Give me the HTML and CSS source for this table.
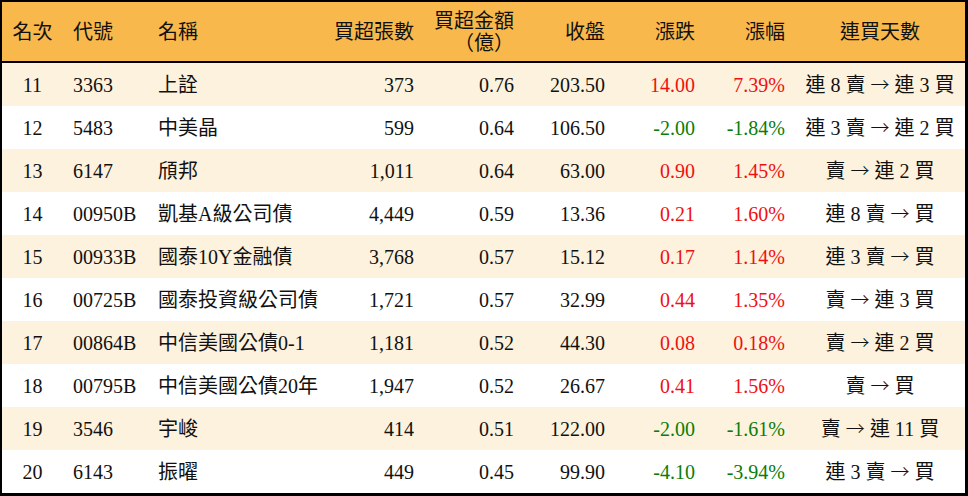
FILE: index.html
```html
<!DOCTYPE html>
<html lang="zh-Hant">
<head>
<meta charset="utf-8">
<title>買超排行</title>
<link rel="stylesheet" href="styles.css">
</head>
<body>
<table class="rank">
  <colgroup>
    <col class="c-no"><col class="c-code"><col class="c-name"><col class="c-vol"><col class="c-amt"><col class="c-close"><col class="c-chg"><col class="c-pct"><col class="c-days">
  </colgroup>
  <thead>
    <tr>
      <th class="ctr">名次</th>
      <th class="lft">代號</th>
      <th class="lft">名稱</th>
      <th class="rgt">買超張數</th>
      <th class="rgt two">買超金額<br>（億）</th>
      <th class="rgt">收盤</th>
      <th class="rgt">漲跌</th>
      <th class="rgt">漲幅</th>
      <th class="ctr">連買天數</th>
    </tr>
  </thead>
  <tbody>
    <tr class="alt"><td class="ctr">11</td><td class="lft">3363</td><td class="lft">上詮</td><td class="rgt">373</td><td class="rgt">0.76</td><td class="rgt">203.50</td><td class="rgt up">14.00</td><td class="rgt up">7.39%</td><td class="ctr">連 8 賣 <span class="arr">→</span> 連 3 買</td></tr>
    <tr><td class="ctr">12</td><td class="lft">5483</td><td class="lft">中美晶</td><td class="rgt">599</td><td class="rgt">0.64</td><td class="rgt">106.50</td><td class="rgt dn">-2.00</td><td class="rgt dn">-1.84%</td><td class="ctr">連 3 賣 <span class="arr">→</span> 連 2 買</td></tr>
    <tr class="alt"><td class="ctr">13</td><td class="lft">6147</td><td class="lft">頎邦</td><td class="rgt">1,011</td><td class="rgt">0.64</td><td class="rgt">63.00</td><td class="rgt up">0.90</td><td class="rgt up">1.45%</td><td class="ctr">賣 <span class="arr">→</span> 連 2 買</td></tr>
    <tr><td class="ctr">14</td><td class="lft">00950B</td><td class="lft">凱基A級公司債</td><td class="rgt">4,449</td><td class="rgt">0.59</td><td class="rgt">13.36</td><td class="rgt up">0.21</td><td class="rgt up">1.60%</td><td class="ctr">連 8 賣 <span class="arr">→</span> 買</td></tr>
    <tr class="alt"><td class="ctr">15</td><td class="lft">00933B</td><td class="lft">國泰10Y金融債</td><td class="rgt">3,768</td><td class="rgt">0.57</td><td class="rgt">15.12</td><td class="rgt up">0.17</td><td class="rgt up">1.14%</td><td class="ctr">連 3 賣 <span class="arr">→</span> 買</td></tr>
    <tr><td class="ctr">16</td><td class="lft">00725B</td><td class="lft">國泰投資級公司債</td><td class="rgt">1,721</td><td class="rgt">0.57</td><td class="rgt">32.99</td><td class="rgt up">0.44</td><td class="rgt up">1.35%</td><td class="ctr">賣 <span class="arr">→</span> 連 3 買</td></tr>
    <tr class="alt"><td class="ctr">17</td><td class="lft">00864B</td><td class="lft">中信美國公債0-1</td><td class="rgt">1,181</td><td class="rgt">0.52</td><td class="rgt">44.30</td><td class="rgt up">0.08</td><td class="rgt up">0.18%</td><td class="ctr">賣 <span class="arr">→</span> 連 2 買</td></tr>
    <tr><td class="ctr">18</td><td class="lft">00795B</td><td class="lft">中信美國公債20年</td><td class="rgt">1,947</td><td class="rgt">0.52</td><td class="rgt">26.67</td><td class="rgt up">0.41</td><td class="rgt up">1.56%</td><td class="ctr">賣 <span class="arr">→</span> 買</td></tr>
    <tr class="alt"><td class="ctr">19</td><td class="lft">3546</td><td class="lft">宇峻</td><td class="rgt">414</td><td class="rgt">0.51</td><td class="rgt">122.00</td><td class="rgt dn">-2.00</td><td class="rgt dn">-1.61%</td><td class="ctr">賣 <span class="arr">→</span> 連 11 買</td></tr>
    <tr><td class="ctr">20</td><td class="lft">6143</td><td class="lft">振曜</td><td class="rgt">449</td><td class="rgt">0.45</td><td class="rgt">99.90</td><td class="rgt dn">-4.10</td><td class="rgt dn">-3.94%</td><td class="ctr">連 3 賣 <span class="arr">→</span> 買</td></tr>
  </tbody>
</table>
</body>
</html>
```

FILE: styles.css
```css
html, body {
  margin: 0;
  padding: 0;
  background: #ffffff;
}

.rank {
  width: 968px;
  border-collapse: separate;
  border-spacing: 0;
  table-layout: fixed;
  border-style: solid;
  border-color: #000;
  border-width: 2px 3px 3px 2px;
  font-family: "Liberation Serif", "Noto Sans CJK TC", serif;
  font-size: 20px;
  color: #111;
}

.c-no { width: 61px; }
.c-code { width: 85px; }
.c-name { width: 176px; }
.c-vol { width: 100px; }
.c-amt { width: 100px; }
.c-close { width: 91px; }
.c-chg { width: 90px; }
.c-pct { width: 90px; }
.c-days { width: 170px; }

.rank thead th {
  background: #f9b84b;
  height: 59px;
  padding: 0 10px;
  font-weight: normal;
  border-bottom: 2px solid #000;
  vertical-align: middle;
  line-height: 22px;
  white-space: nowrap;
}

.rank tbody td {
  height: 43px;
  padding: 0 10px;
  vertical-align: middle;
  white-space: nowrap;
  line-height: 24px;
}

.rank tbody tr.alt td {
  background: #fdf2dd;
}

.ctr { text-align: center; }
.lft { text-align: left; }
.rgt { text-align: right; }

.rank th.ctr, .rank td.ctr { padding: 0; }

.arr {
  font-family: "Noto Sans CJK TC", sans-serif;
  font-weight: 300;
  font-size: 19px;
}

.up { color: #f01010; }
.dn { color: #0a7d0a; }
```
